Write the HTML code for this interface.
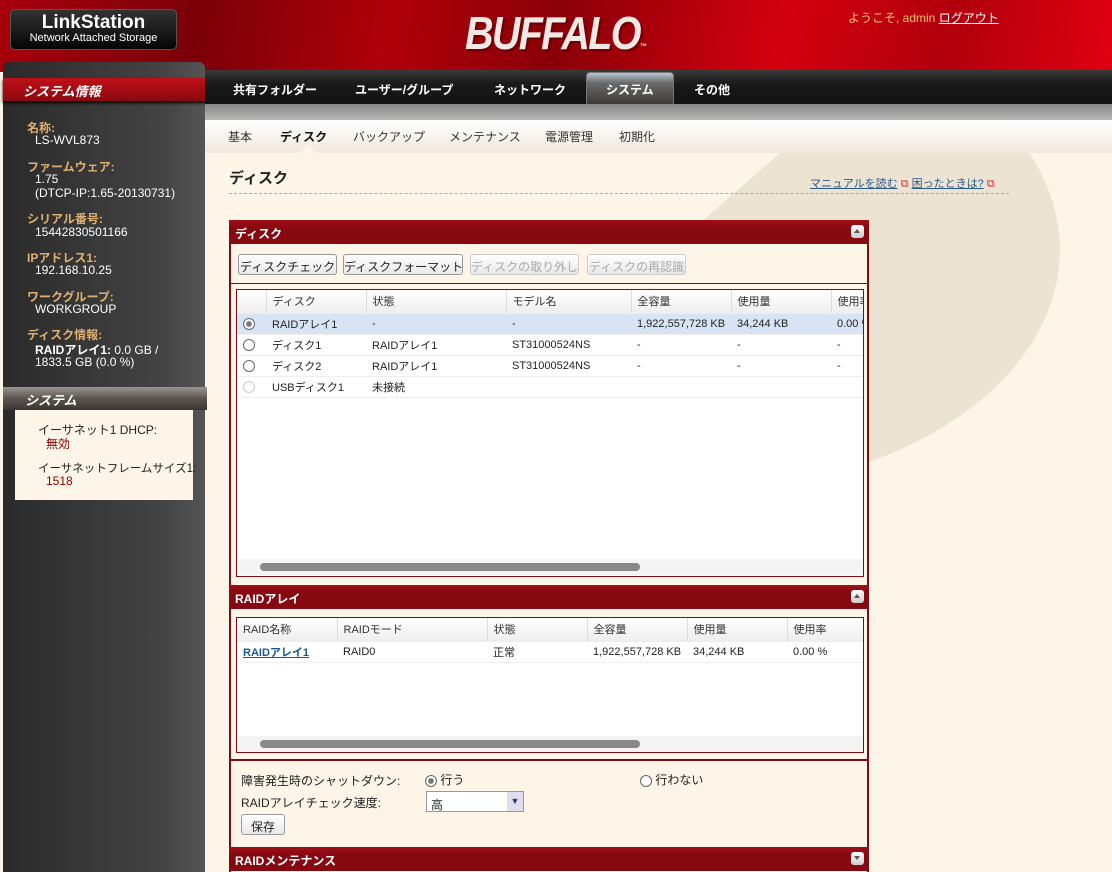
<!DOCTYPE html>
<html><head><meta charset="utf-8">
<style>
*{margin:0;padding:0;box-sizing:border-box}
body{width:1112px;height:872px;overflow:hidden;position:relative;background:#fdf6e8;font-family:"Liberation Sans","Noto Sans CJK JP",sans-serif;font-size:12px;color:#222}
.abs{position:absolute}
#hdr{left:0;top:0;width:1112px;height:72px;background:linear-gradient(100deg,#a8000c 0%,#7a0008 18%,#b0000a 35%,#8a0008 50%,#d40010 70%,#b0000c 85%,#e00012 100%)}
#logo{left:10px;top:9px;width:167px;height:41px;background:linear-gradient(#333,#050505);border-radius:5px;border:1px solid #555;color:#fff;text-align:center}
#buf{left:465px;top:6px;font:italic bold 46px "Liberation Sans",sans-serif;color:#f2e8e6;letter-spacing:-2px;text-shadow:2px 2px 2px #600;transform:scaleX(0.86);transform-origin:left}
#side{left:3px;top:62px;width:202px;height:810px;background:linear-gradient(90deg,#2a2a2a,#444 80%,#555);border-radius:6px 6px 0 0}
#nav{left:205px;top:70px;width:907px;height:34px;background:linear-gradient(#3a3a3a,#1a1a1a 40%,#111)}
.nv{position:absolute;top:81px;color:#fff;font-weight:bold;font-size:12px}
#act{left:586px;top:72px;width:88px;height:35px;background:linear-gradient(#b8c8d4,#6a6a6a 30%,#3a3530);border-radius:4px;border:1px solid #777}
#strip{left:205px;top:104px;width:907px;height:16px;background:linear-gradient(#888,#b8b8b8)}
#sub{left:205px;top:120px;width:907px;height:33px;background:linear-gradient(#fff,#f0e8dc)}
.sb{position:absolute;top:128px;color:#333}
.lbl{color:#e0b070;font-weight:bold;position:absolute;left:27px}
.val{color:#fff;position:absolute;left:35px}
.ph{position:absolute;left:229px;width:640px;height:24px;background:linear-gradient(#a01018,#860810 30%,#860810);color:#fff;font-weight:bold;padding:5px 6px;font-size:12px}
.ph i{position:absolute;right:5px;top:5px;width:13px;height:13px;background:linear-gradient(#fff,#ccc);border-radius:3px}
.ph i:after{content:"";position:absolute;left:3px;top:4px;border-left:3.5px solid transparent;border-right:3.5px solid transparent;border-bottom:4px solid #555}
.ph i.dn:after{border-bottom:none;border-top:4px solid #555}
.btn{position:absolute;top:254px;height:21px;border:1px solid #999;border-radius:3px;background:linear-gradient(#fff,#e8e8e8);padding:3px 0;font-size:12px;text-align:center;white-space:nowrap}
.dis{color:#aaa;border-color:#ccc}
table{border-collapse:collapse;font-size:11px;table-layout:fixed}
td,th{height:21px;padding:0 6px;text-align:left;font-weight:normal;white-space:nowrap;border-bottom:1px solid #eee;overflow:hidden}
th{height:23px;background:linear-gradient(#fff,#eee);border-right:1px solid #ddd;color:#333}
.rad{display:inline-block;width:12px;height:12px;border:1px solid #666;border-radius:50%;vertical-align:middle;background:#fff}
.sel{background:#d8e4f4}
.scr{position:absolute;height:16px;background:#f4f4f4}
.scr b{position:absolute;left:23px;top:4px;height:8px;border-radius:4px;background:#888}
</style></head><body>
<div id="hdr" class="abs"></div>
<div id="logo" class="abs"><div style="font:bold 19px 'Liberation Sans',sans-serif;margin-top:2px">LinkStation</div><div style="font-size:11px;margin-top:-2px">Network Attached Storage</div></div>
<div id="buf" class="abs">BUFFALO<span style="font-size:8px">™</span></div>
<div class="abs" style="left:848px;top:9px;color:#f2c070;font-size:12px">ようこそ, admin <u style="color:#fff">ログアウト</u></div>

<div id="side" class="abs"></div>
<div class="abs" style="left:3px;top:78px;width:204px;height:23px;background:linear-gradient(#c01018,#8a0810);color:#fff;font:italic bold 13px 'Liberation Sans','Noto Sans CJK JP',sans-serif;padding:3px 20px;box-shadow:0 2px 3px #000">システム情報</div>
<div class="lbl" style="top:119px">名称:</div><div class="val" style="top:133px">LS-WVL873</div>
<div class="lbl" style="top:158px">ファームウェア:</div><div class="val" style="top:172px">1.75</div><div class="val" style="top:186px">(DTCP-IP:1.65-20130731)</div>
<div class="lbl" style="top:210px">シリアル番号:</div><div class="val" style="top:225px">15442830501166</div>
<div class="lbl" style="top:249px">IPアドレス1:</div><div class="val" style="top:263px">192.168.10.25</div>
<div class="lbl" style="top:288px">ワークグループ:</div><div class="val" style="top:302px">WORKGROUP</div>
<div class="lbl" style="top:326px">ディスク情報:</div><div class="val" style="top:341px"><b>RAIDアレイ1:</b> 0.0 GB /</div><div class="val" style="top:355px">1833.5 GB (0.0 %)</div>
<div class="abs" style="left:3px;top:387px;width:204px;height:23px;background:linear-gradient(#9a9590,#5a5550 50%,#3a3530);color:#fff;font:italic bold 13px 'Liberation Sans','Noto Sans CJK JP',sans-serif;padding:3px 22px">システム</div>
<div class="abs" style="left:15px;top:410px;width:178px;height:90px;background:#fdf6e8"></div>
<div class="abs" style="left:38px;top:421px">イーサネット1 DHCP:</div><div class="abs" style="left:46px;top:435px;color:#800">無効</div>
<div class="abs" style="left:38px;top:460px;font-size:11.5px;white-space:nowrap">イーサネットフレームサイズ1:</div><div class="abs" style="left:46px;top:474px;color:#800">1518</div>

<div class="abs" style="left:205px;top:153px;width:907px;height:719px;overflow:hidden">
<div class="abs" style="left:135px;top:-143px;width:720px;height:480px;border-radius:50%;background:#ece3d3"></div>
<div class="abs" style="left:0;top:0;width:600px;height:70px;background:#fdf6e8;clip-path:polygon(0 0,575px 0,495px 70px,0 70px)"></div>
</div>

<div id="nav" class="abs"></div>
<div id="act" class="abs"></div>
<div class="nv" style="left:233px">共有フォルダー</div><div class="nv" style="left:355px">ユーザー/グループ</div><div class="nv" style="left:494px">ネットワーク</div><div class="nv" style="left:606px">システム</div><div class="nv" style="left:694px">その他</div>
<div class="abs" style="left:620px;top:106px;width:0;height:0;border-left:9px solid transparent;border-right:9px solid transparent;border-top:9px solid #3a3530"></div>
<div id="strip" class="abs"></div>
<div id="sub" class="abs"></div>
<div class="sb" style="left:228px">基本</div><div class="sb" style="left:280px;font-weight:bold;color:#111">ディスク</div><div class="sb" style="left:353px">バックアップ</div><div class="sb" style="left:449px">メンテナンス</div><div class="sb" style="left:545px">電源管理</div><div class="sb" style="left:619px">初期化</div>
<div class="abs" style="left:299px;top:145px;width:0;height:0;border-left:9px solid transparent;border-right:9px solid transparent;border-bottom:8px solid #fdf6e8"></div>

<div class="abs" style="left:229px;top:167px;font-size:15px;font-weight:bold;color:#222">ディスク</div>
<div class="abs" style="left:810px;top:175px;color:#2a5a8a;font-size:11px"><u>マニュアルを読む</u> <span style="color:#c33">⧉</span> <u>困ったときは?</u> <span style="color:#c33">⧉</span></div>
<div class="abs" style="left:229px;top:193px;width:780px;border-top:1px dashed #aaa"></div>

<div class="abs" style="left:229px;top:220px;width:640px;height:652px;border:2px solid #860810;border-bottom:none;background:#fdf6e8"></div>
<div class="ph" style="top:220px">ディスク<i></i></div>
<div class="btn" style="left:238px;width:99px">ディスクチェック</div><div class="btn" style="left:343px;width:120px">ディスクフォーマット</div><div class="btn dis" style="left:470px;width:109px">ディスクの取り外し</div><div class="btn dis" style="left:587px;width:99px">ディスクの再認識</div>
<div class="abs" style="left:231px;top:283px;width:636px;border-top:1px solid #860810"></div>
<div class="abs" style="left:236px;top:289px;width:628px;height:288px;border:1px solid #860810;background:#fff;overflow:hidden">
<table style="width:660px"><colgroup><col style="width:29px"><col style="width:100px"><col style="width:140px"><col style="width:125px"><col style="width:100px"><col style="width:100px"><col></colgroup><tr><th></th><th>ディスク</th><th>状態</th><th>モデル名</th><th>全容量</th><th>使用量</th><th>使用率</th></tr>
<tr class="sel"><td><span class="rad" style="background:radial-gradient(#777 35%,#fff 45%)"></span></td><td>RAIDアレイ1</td><td>-</td><td>-</td><td>1,922,557,728 KB</td><td>34,244 KB</td><td>0.00 %</td></tr>
<tr><td><span class="rad"></span></td><td>ディスク1</td><td>RAIDアレイ1</td><td>ST31000524NS</td><td>-</td><td>-</td><td>-</td></tr>
<tr><td><span class="rad"></span></td><td>ディスク2</td><td>RAIDアレイ1</td><td>ST31000524NS</td><td>-</td><td>-</td><td>-</td></tr>
<tr><td><span class="rad" style="border-color:#ccc"></span></td><td>USBディスク1</td><td>未接続</td><td></td><td></td><td></td><td></td></tr></table>
<div class="scr" style="left:0;top:269px;width:626px"><b style="width:380px"></b></div>
</div>

<div class="ph" style="top:585px">RAIDアレイ<i></i></div>
<div class="abs" style="left:236px;top:617px;width:628px;height:136px;border:1px solid #860810;background:#fff;overflow:hidden">
<table style="width:660px"><colgroup><col style="width:100px"><col style="width:150px"><col style="width:100px"><col style="width:100px"><col style="width:100px"><col></colgroup><tr><th>RAID名称</th><th>RAIDモード</th><th>状態</th><th>全容量</th><th>使用量</th><th>使用率</th></tr>
<tr><td><u style="color:#1a5a8a;font-weight:bold">RAIDアレイ1</u></td><td>RAID0</td><td>正常</td><td>1,922,557,728 KB</td><td>34,244 KB</td><td>0.00 %</td></tr></table>
<div class="scr" style="left:0;top:118px;width:626px"><b style="width:380px"></b></div>
</div>
<div class="abs" style="left:231px;top:759px;width:636px;border-top:2px solid #860810"></div>
<div class="abs" style="left:241px;top:772px">障害発生時のシャットダウン:</div>
<div class="abs" style="left:425px;top:771px"><span class="rad" style="background:radial-gradient(#777 35%,#fff 45%)"></span> 行う</div>
<div class="abs" style="left:640px;top:771px"><span class="rad"></span> 行わない</div>
<div class="abs" style="left:241px;top:794px">RAIDアレイチェック速度:</div>
<div class="abs" style="left:426px;top:791px;width:98px;height:21px;border:1px solid #999;background:#fff;padding:4px 4px">高<span style="position:absolute;right:0;top:0;width:16px;height:19px;background:#dde;font-size:9px;text-align:center;line-height:19px;color:#336">▼</span></div>
<div class="abs" style="left:241px;top:814px;width:44px;height:21px;border:1px solid #999;border-radius:3px;background:linear-gradient(#fff,#e8e8e8);text-align:center;padding-top:3px">保存</div>
<div class="ph" style="top:847px">RAIDメンテナンス<i class="dn"></i></div>
</body></html>
